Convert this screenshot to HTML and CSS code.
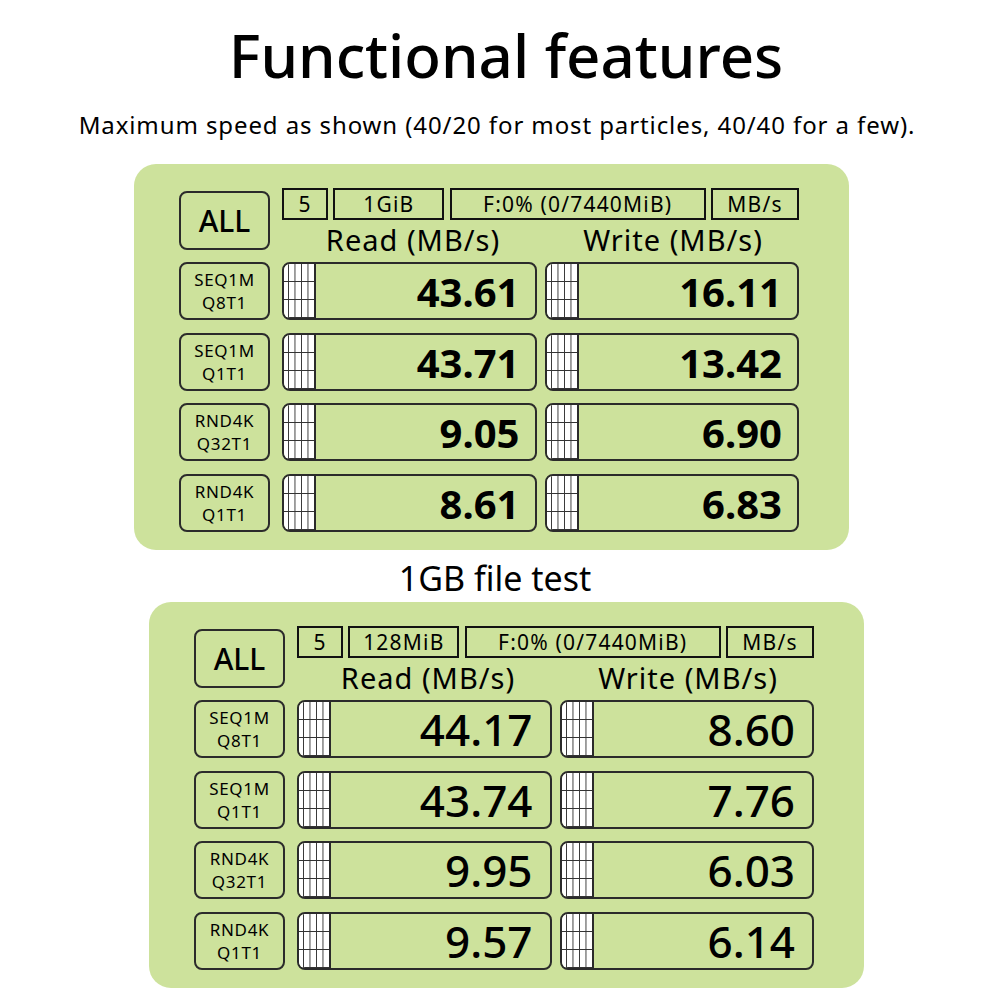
FILE: index.html
```html
<!DOCTYPE html>
<html lang="en">
<head>
    <title>Functional features</title>
    <link rel="stylesheet" href="styles.css">
</head>
<body>

<h1 class="title">Functional features</h1>
<p class="subtitle">Maximum speed as shown (40/20 for most particles, 40/40 for a few).</p>

<!-- 1GiB test -->
<div class="panel panel-one">
    <div class="head">
        <div class="btn all">ALL</div>
        <div class="head-right">
            <div class="opts">
                <span class="opt w-count">5</span>
                <span class="opt w-size">1GiB</span>
                <span class="opt w-free">F:0% (0/7440MiB)</span>
                <span class="opt w-unit">MB/s</span>
            </div>
            <div class="cols">
                <div class="col-title">Read (MB/s)</div>
                <div class="col-title">Write (MB/s)</div>
            </div>
        </div>
    </div>
    <div class="rows">
        <div class="row">
            <div class="btn label">SEQ1M<br>Q8T1</div>
            <div class="bars">
                <div class="bar"><div class="grid"></div><div class="val">43.61</div></div>
                <div class="bar"><div class="grid"></div><div class="val">16.11</div></div>
            </div>
        </div>
        <div class="row">
            <div class="btn label">SEQ1M<br>Q1T1</div>
            <div class="bars">
                <div class="bar"><div class="grid"></div><div class="val">43.71</div></div>
                <div class="bar"><div class="grid"></div><div class="val">13.42</div></div>
            </div>
        </div>
        <div class="row">
            <div class="btn label">RND4K<br>Q32T1</div>
            <div class="bars">
                <div class="bar"><div class="grid"></div><div class="val">9.05</div></div>
                <div class="bar"><div class="grid"></div><div class="val">6.90</div></div>
            </div>
        </div>
        <div class="row">
            <div class="btn label">RND4K<br>Q1T1</div>
            <div class="bars">
                <div class="bar"><div class="grid"></div><div class="val">8.61</div></div>
                <div class="bar"><div class="grid"></div><div class="val">6.83</div></div>
            </div>
        </div>
    </div>
</div>

<p class="caption">1GB file test</p>

<!-- 128MiB test -->
<div class="panel panel-two">
    <div class="head">
        <div class="btn all">ALL</div>
        <div class="head-right">
            <div class="opts">
                <span class="opt w-count">5</span>
                <span class="opt w-size">128MiB</span>
                <span class="opt w-free">F:0% (0/7440MiB)</span>
                <span class="opt w-unit">MB/s</span>
            </div>
            <div class="cols">
                <div class="col-title">Read (MB/s)</div>
                <div class="col-title">Write (MB/s)</div>
            </div>
        </div>
    </div>
    <div class="rows">
        <div class="row">
            <div class="btn label">SEQ1M<br>Q8T1</div>
            <div class="bars">
                <div class="bar"><div class="grid"></div><div class="val">44.17</div></div>
                <div class="bar"><div class="grid"></div><div class="val">8.60</div></div>
            </div>
        </div>
        <div class="row">
            <div class="btn label">SEQ1M<br>Q1T1</div>
            <div class="bars">
                <div class="bar"><div class="grid"></div><div class="val">43.74</div></div>
                <div class="bar"><div class="grid"></div><div class="val">7.76</div></div>
            </div>
        </div>
        <div class="row">
            <div class="btn label">RND4K<br>Q32T1</div>
            <div class="bars">
                <div class="bar"><div class="grid"></div><div class="val">9.95</div></div>
                <div class="bar"><div class="grid"></div><div class="val">6.03</div></div>
            </div>
        </div>
        <div class="row">
            <div class="btn label">RND4K<br>Q1T1</div>
            <div class="bars">
                <div class="bar"><div class="grid"></div><div class="val">9.57</div></div>
                <div class="bar"><div class="grid"></div><div class="val">6.14</div></div>
            </div>
        </div>
    </div>
</div>

</body>
</html>
```

FILE: styles.css
```css
body {
    margin: 0;
    background: #ffffff;
    color: #000000;
    font-family: "Noto Sans", "Open Sans", sans-serif;
}
.title {
    margin: 19px 0 0 0;
    padding-left: 12px;
    font-size: 60px;
    font-weight: 500;
    line-height: 72px;
    text-align: center;
}
.subtitle {
    margin: 18px 0 0 0;
    padding-right: 6px;
    font-size: 24px;
    letter-spacing: 0.9px;
    line-height: 31px;
    text-align: center;
}
.caption {
    margin: 8px 0 0 0;
    padding-right: 10px;
    font-size: 34px;
    line-height: 40px;
    text-align: center;
}
.panel {
    width: 715px;
    box-sizing: border-box;
    padding: 24px 50px 18px 45px;
    background: #cde29c;
    border-radius: 22px;
}
.panel-one {
    margin: 24px 0 0 134px;
}
.panel-two {
    margin: 4px 0 0 149px;
}
.head {
    display: flex;
    gap: 12px;
    height: 74px;
}
.btn {
    box-sizing: border-box;
    width: 91px;
    border: 2px solid #2b2b2b;
    border-radius: 8px;
    display: flex;
    align-items: center;
    justify-content: center;
    text-align: center;
}
.all {
    height: 59px;
    margin-top: 3px;
    font-size: 30px;
    font-weight: 500;
}
.head-right {
    flex: 1;
}
.opts {
    display: flex;
    justify-content: space-between;
    height: 32px;
}
.opt {
    box-sizing: border-box;
    border: 2px solid #111111;
    font-size: 21px;
    letter-spacing: 1.2px;
    line-height: 28px;
    text-align: center;
    white-space: nowrap;
}
.w-count { width: 46px; }
.w-size { width: 111px; }
.w-free { width: 256px; }
.w-unit { width: 88px; }
.cols {
    display: flex;
    gap: 8px;
    margin-top: 2px;
    padding-left: 5px;
}
.col-title {
    flex: 1;
    font-size: 29px;
    letter-spacing: 1px;
    line-height: 36px;
    text-align: center;
}
.rows {
    display: flex;
    flex-direction: column;
    gap: 12.67px;
}
.row {
    display: flex;
    gap: 12px;
    height: 58px;
}
.label {
    font-size: 17px;
    letter-spacing: 0.7px;
    line-height: 23px;
}
.bars {
    flex: 1;
    display: flex;
    gap: 8px;
}
.bar {
    flex: 1;
    display: flex;
    box-sizing: border-box;
    border: 2px solid #2b2b2b;
    border-radius: 8px;
    overflow: hidden;
}
.grid {
    width: 30px;
    border-right: 2px solid #2b2b2b;
    background-color: #ffffff;
    background-image:
        linear-gradient(to right, #333333 1px, transparent 1px),
        linear-gradient(to bottom, transparent 17px, #333333 17px, #333333 18px, transparent 18px);
    background-size: 6.5px 100%, 100% 18px;
    background-position: 4px 0, 0 0;
}
.val {
    flex: 1;
    padding: 2px 15px 0 0;
    font-size: 40px;
    font-weight: 700;
    line-height: 52px;
    text-align: right;
}
.panel-two .val {
    padding: 0 17px 0 0;
    font-size: 44px;
    font-weight: 500;
    line-height: 54px;
}
```
